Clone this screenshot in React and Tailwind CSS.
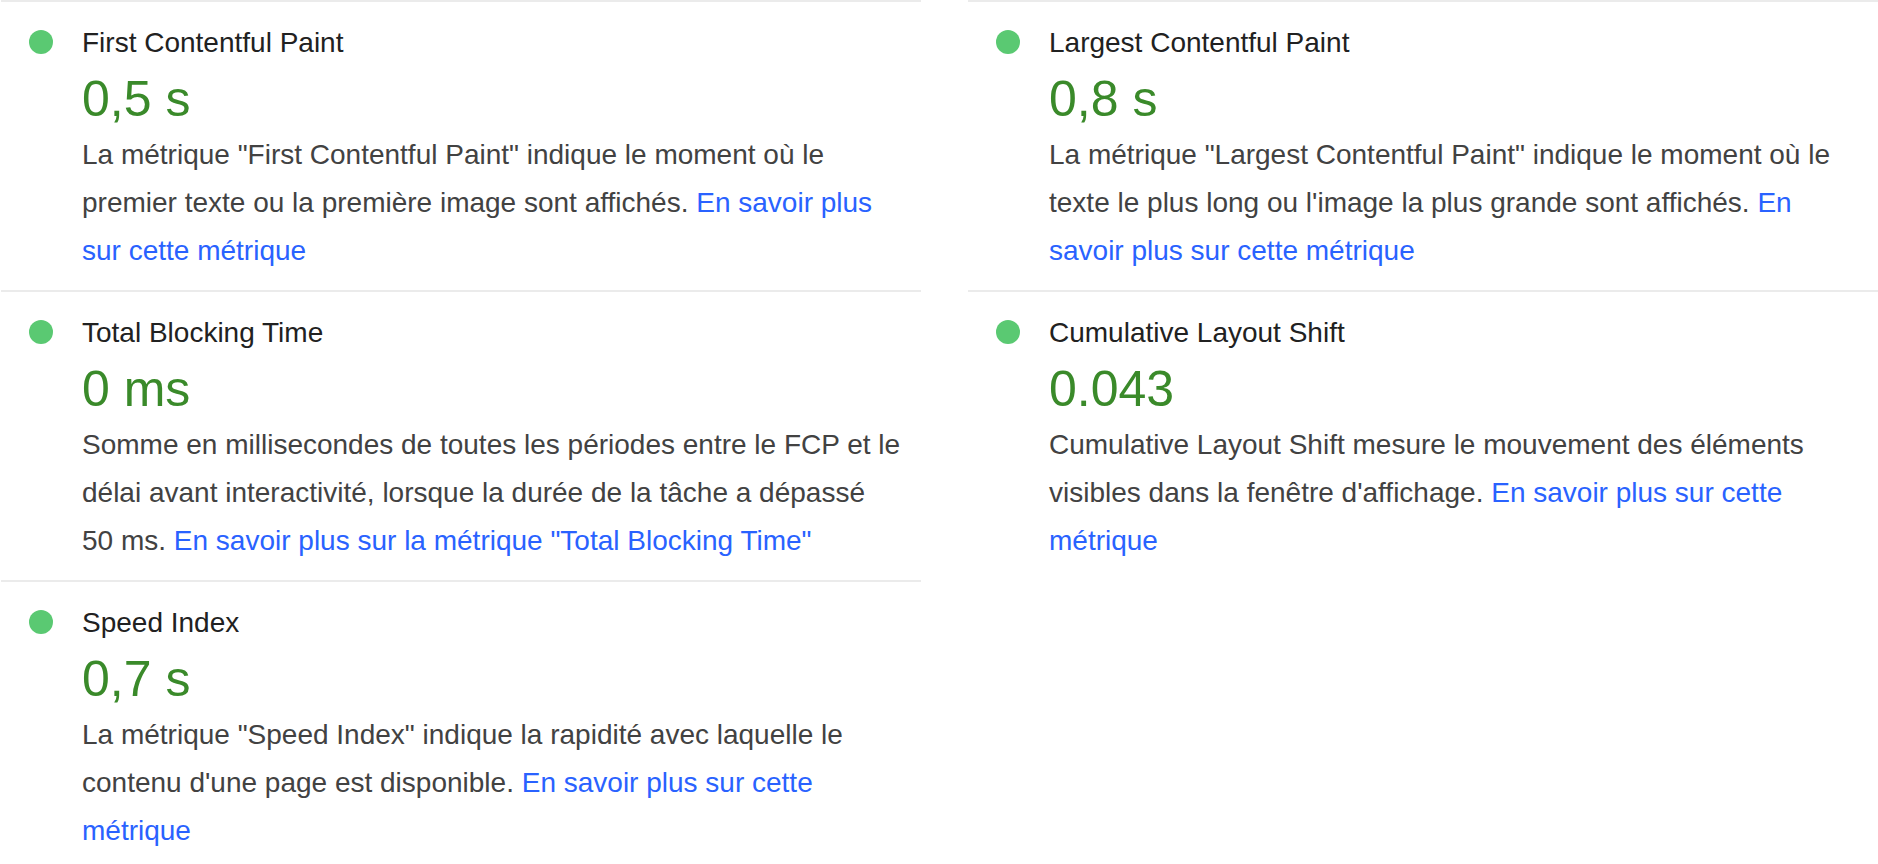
const left = [
  {
    title: "First Contentful Paint",
    value: "0,5 s",
    text: 'La métrique "First Contentful Paint" indique le moment où le premier texte ou la première image sont affichés.',
    link: "En savoir plus sur cette métrique",
  },
  {
    title: "Total Blocking Time",
    value: "0 ms",
    text: "Somme en millisecondes de toutes les périodes entre le FCP et le délai avant interactivité, lorsque la durée de la tâche a dépassé 50\u00a0ms.",
    link: 'En savoir plus sur la métrique "Total Blocking Time"',
  },
  {
    title: "Speed Index",
    value: "0,7 s",
    text: 'La métrique "Speed Index" indique la rapidité avec laquelle le contenu d\'une page est disponible.',
    link: "En savoir plus sur cette métrique",
  },
];

const right = [
  {
    title: "Largest Contentful Paint",
    value: "0,8 s",
    text: 'La métrique "Largest Contentful Paint" indique le moment où le texte le plus long ou l\'image la plus grande sont affichés.',
    link: "En savoir plus sur cette métrique",
  },
  {
    title: "Cumulative Layout Shift",
    value: "0.043",
    text: "Cumulative Layout Shift mesure le mouvement des éléments visibles dans la fenêtre d'affichage.",
    link: "En savoir plus sur cette métrique",
  },
];

function Metric({ metric, textWidth }) {
  return (
    <div className="border-t-2 border-[#ebebeb] h-[290px] flex">
      <div className="ml-[28px] mt-[28px] w-6 h-6 rounded-full bg-[#5ac972] shrink-0" />
      <div className={`ml-[29px] ${textWidth}`}>
        <div className="mt-[23px] text-[28px] leading-[36px] text-[#212121]">{metric.title}</div>
        <div className="mt-[10px] text-[50px] leading-[56px] text-[#3a8a2a]">{metric.value}</div>
        <p className="mt-[4px] text-[28px] leading-[48px] text-[#424242]">
          {metric.text}{" "}
          <a href="#" className="text-[#2962ff]">
            {metric.link}
          </a>
        </p>
      </div>
    </div>
  );
}

export default function App() {
  return (
    <div
      className="w-[1878px] h-[864px] bg-white flex overflow-hidden"
      style={{ fontFamily: '"Liberation Sans", Arial, Helvetica, sans-serif' }}
    >
      <div className="w-[920px] shrink-0 ml-px">
        {left.map((m) => (
          <Metric key={m.title} metric={m} textWidth="w-[828px]" />
        ))}
      </div>
      <div className="ml-[47px] flex-1">
        {right.map((m) => (
          <Metric key={m.title} metric={m} textWidth="w-[785px]" />
        ))}
      </div>
    </div>
  );
}
